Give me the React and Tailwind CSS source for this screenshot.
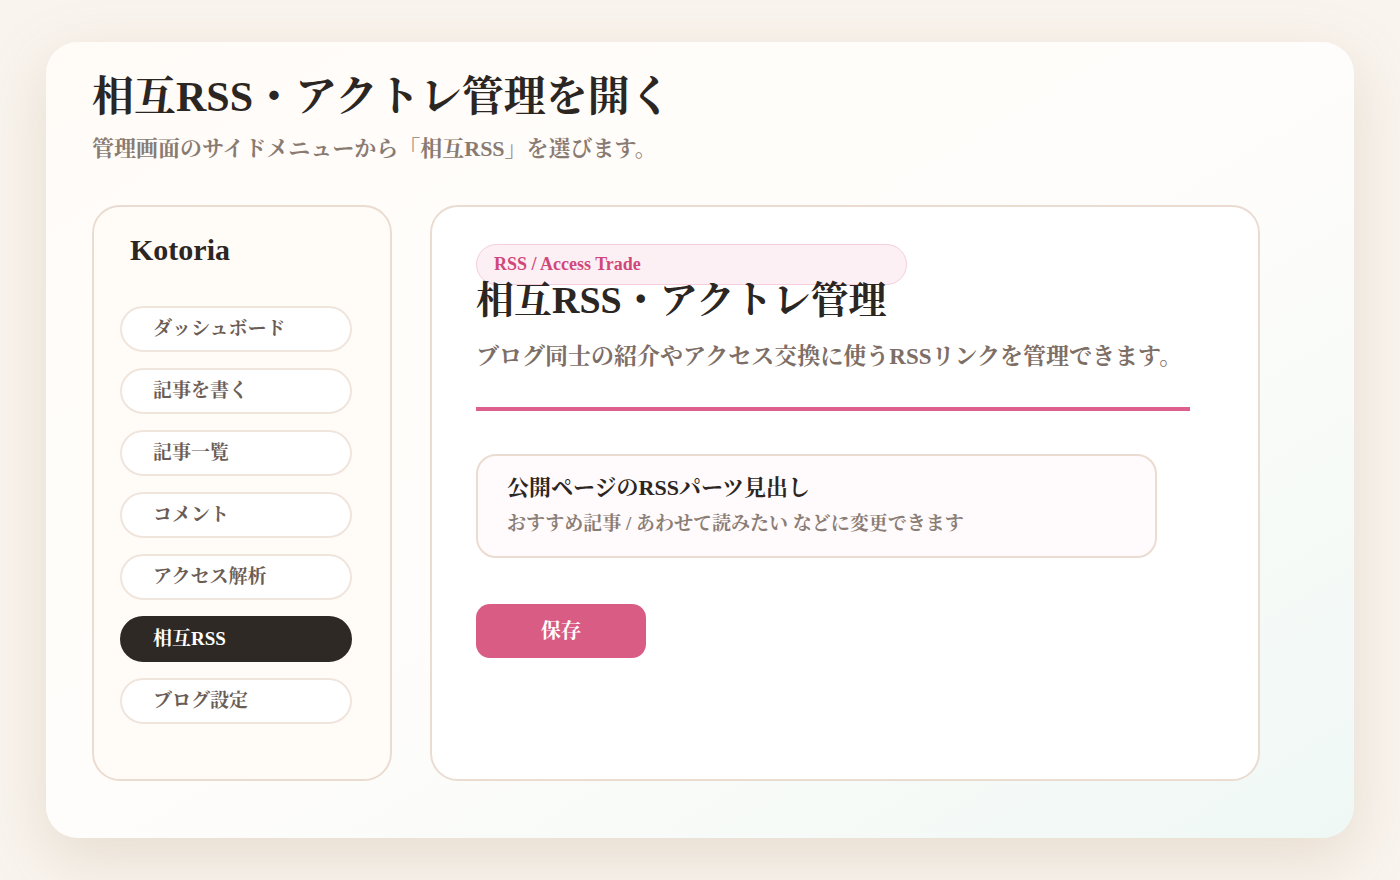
import React from "react";

const nav = ["ダッシュボード", "記事を書く", "記事一覧", "コメント", "アクセス解析", "相互RSS", "ブログ設定"];

export default function App() {
  return (
    <div
      className="w-[1400px] h-[880px] bg-[#f9f4ee] pt-[42px] pl-[46px]"
      style={{ fontFamily: '"Liberation Serif", "Noto Serif CJK JP", serif' }}
    >
      <div className="w-[1308px] h-[796px] rounded-[32px] bg-gradient-to-br from-[#fffcf8] via-[#fffdfb] to-[#eff8f5] shadow-[0_20px_60px_rgba(180,150,120,0.25)] pl-[46px] pt-[27px]">
        <h1 className="text-[42px] leading-[56px] font-bold text-[#2c2623]">相互RSS・アクトレ管理を開く</h1>
        <p className="mt-[9px] text-[22px] leading-[30px] font-bold text-[#8a7b72]">管理画面のサイドメニューから「相互RSS」を選びます。</p>
        <div className="mt-[41px] flex gap-[38px]">
          <aside className="w-[300px] h-[576px] rounded-[28px] border-2 border-[#ebdcd1] bg-[#fffcf8] pt-[24px] pl-[26px]">
            <div className="pl-[10px] text-[30px] leading-[38px] font-bold text-[#2c2623]">Kotoria</div>
            <div className="mt-[37px] flex flex-col gap-[16px]">
              {nav.map((n) => (
                <div
                  key={n}
                  className={
                    n === "相互RSS"
                      ? "w-[232px] h-[46px] rounded-full bg-[#2f2926] border-2 border-[#2f2926] pl-[31px] flex items-center text-[19px] font-bold text-white"
                      : "w-[232px] h-[46px] rounded-full bg-white border-2 border-[#f0e5dc] pl-[31px] flex items-center text-[19px] font-bold text-[#6b5d55]"
                  }
                >
                  {n}
                </div>
              ))}
            </div>
          </aside>
          <main className="w-[830px] h-[576px] rounded-[28px] border-2 border-[#ebdcd1] bg-white pt-[37px] pl-[44px]">
            <div className="w-[431px] h-[41px] rounded-full bg-[#fdf0f4] border border-[#f5cddb] pl-[17px] flex items-center text-[18px] font-bold text-[#d0487a]">
              RSS / Access Trade
            </div>
            <h2 className="mt-[-8px] text-[38px] leading-[46px] font-bold text-[#2c2623]">相互RSS・アクトレ管理</h2>
            <p className="mt-[19px] text-[23px] leading-[30px] font-bold text-[#7d6e66]">ブログ同士の紹介やアクセス交換に使うRSSリンクを管理できます。</p>
            <div className="mt-[35px] w-[714px] h-[4px] bg-[#dc5f8e]"></div>
            <div className="mt-[43px] w-[681px] h-[104px] rounded-[20px] border-2 border-[#ebdcd1] bg-[#fffafb] pl-[29px] pt-[17px]">
              <div className="text-[22px] leading-[30px] font-bold text-[#2c2623]">公開ページのRSSパーツ見出し</div>
              <div className="mt-[8px] text-[19px] leading-[26px] font-bold text-[#8a7d75]">おすすめ記事 / あわせて読みたい などに変更できます</div>
            </div>
            <div className="mt-[46px] w-[170px] h-[54px] rounded-[14px] bg-[#d95c84] flex items-center justify-center text-[20px] font-bold text-white">
              保存
            </div>
          </main>
        </div>
      </div>
    </div>
  );
}
